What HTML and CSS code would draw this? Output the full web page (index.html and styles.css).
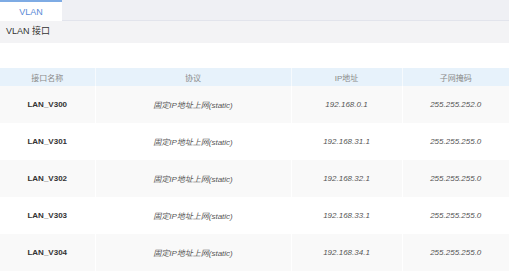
FILE: index.html
```html
<!DOCTYPE html>
<html lang="zh">
<head>
<meta charset="utf-8">
<link rel="stylesheet" href="styles.css">
</head>
<body>
<div class="tabs">
  <div class="tab">VLAN</div>
</div>
<div class="section-title">VLAN 接口</div>
<div class="table-wrap">
  <table class="grid">
    <colgroup>
      <col class="c1"><col class="c2"><col class="c3"><col class="c4">
    </colgroup>
    <thead>
      <tr><th>接口名称</th><th>协议</th><th>IP地址</th><th>子网掩码</th></tr>
    </thead>
    <tbody>
      <tr class="alt"><td class="name">LAN_V300</td><td class="it">固定IP地址上网(static)</td><td class="it">192.168.0.1</td><td class="it">255.255.252.0</td></tr>
      <tr><td class="name">LAN_V301</td><td class="it">固定IP地址上网(static)</td><td class="it">192.168.31.1</td><td class="it">255.255.255.0</td></tr>
      <tr class="alt"><td class="name">LAN_V302</td><td class="it">固定IP地址上网(static)</td><td class="it">192.168.32.1</td><td class="it">255.255.255.0</td></tr>
      <tr><td class="name">LAN_V303</td><td class="it">固定IP地址上网(static)</td><td class="it">192.168.33.1</td><td class="it">255.255.255.0</td></tr>
      <tr class="alt"><td class="name">LAN_V304</td><td class="it">固定IP地址上网(static)</td><td class="it">192.168.34.1</td><td class="it">255.255.255.0</td></tr>
    </tbody>
  </table>
</div>
</body>
</html>
```
FILE: styles.css
```css
html, body {
  margin: 0;
  padding: 0;
  background: #ffffff;
  font-family: "Liberation Sans", "Noto Sans CJK SC", sans-serif;
}
.tabs {
  height: 20px;
  background: #eff0f4;
  border-bottom: 1px solid #e2e4ec;
  display: flex;
}
.tab {
  width: 62px;
  height: 19px;
  margin-bottom: -1px;
  background: #ffffff;
  border-top: 2px solid #7eabe4;
  box-sizing: content-box;
  color: #5a8ad6;
  font-size: 9px;
  line-height: 20px;
  text-align: center;
}
.section-title {
  height: 22px;
  background: #f3f3f5;
  padding-left: 6px;
  color: #333333;
  font-size: 9px;
  line-height: 21px;
}
.table-wrap {
  padding-top: 25px;
}
.grid {
  width: 100%;
  border-collapse: collapse;
  table-layout: fixed;
}
.c1 { width: 95px; }
.c2 { width: 196px; }
.c3 { width: 111px; }
.c4 { width: 107px; }
.grid th {
  height: 18px;
  padding: 0;
  background: #e7f2fb;
  color: #8a8a8a;
  font-weight: normal;
  font-size: 8px;
  text-align: center;
  border-left: 1px solid #f6fafd;
}
.grid td {
  height: 37px;
  padding: 0;
  text-align: center;
  font-size: 8px;
  border-left: 1px solid #ffffff;
}
.grid th:first-child, .grid td:first-child {
  border-left: none;
}
.grid tr.alt td {
  background: #f9f9f9;
}
.name {
  color: #333333;
  font-weight: bold;
}
.it {
  color: #555555;
  font-style: italic;
}
```
